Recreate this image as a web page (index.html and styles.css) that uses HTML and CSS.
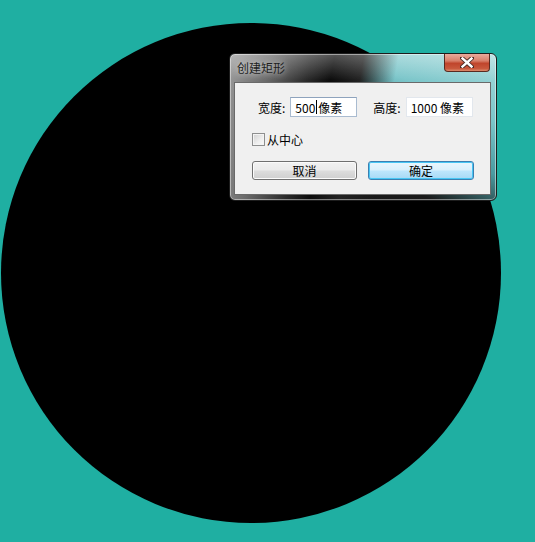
FILE: index.html
```html
<!DOCTYPE html>
<html lang="zh">
<head>
    <meta charset="UTF-8">
    <meta name="viewport" content="width=device-width, initial-scale=1.0">
    <title>创建矩形</title>
    <link rel="stylesheet" href="styles.css">
</head>
<body>
    <!-- 画布上的圆 -->
    <div class="circle"></div>

    <!-- 对话框 -->
    <div class="dialog">
        <div class="titlebar">
            <span class="title">创建矩形</span>
            <span class="close">
                <svg width="14" height="11" viewBox="0 0 14 11">
                    <path d="M2 1 L12 10 M12 1 L2 10" stroke="#4a2a24" stroke-width="4.2" stroke-linecap="square"/>
                    <path d="M2.5 1.5 L11.5 9.5 M11.5 1.5 L2.5 9.5" stroke="#ffffff" stroke-width="2.4" stroke-linecap="square"/>
                </svg>
            </span>
        </div>
        <div class="client">
            <div class="row-size">
                <span class="label">宽度:</span>
                <span class="field field-focus">500<span class="caret"></span>像素</span>
                <span class="label label-gap">高度:</span>
                <span class="field">1000 像素</span>
            </div>
            <div class="row-check">
                <span class="checkbox"></span>
                <span class="label">从中心</span>
            </div>
            <div class="row-buttons">
                <button class="button">取消</button>
                <button class="button button-default">确定</button>
            </div>
        </div>
    </div>
</body>
</html>
```

FILE: styles.css
```css
body {
    background-color: #1fafa2;
    font-family: "Noto Sans CJK SC", "Noto Sans", sans-serif;
    font-size: 12px;
    color: #000;
    margin: 0;
    padding: 0;
    width: 535px;
    height: 542px;
    overflow: hidden;
    position: relative;
}
.circle {
    position: absolute;
    left: 1px;
    top: 23px;
    width: 500px;
    height: 500px;
    border-radius: 50%;
    background-color: #000;
}
.dialog {
    position: absolute;
    left: 229px;
    top: 53px;
    width: 268px;
    height: 148px;
    box-sizing: border-box;
    border: 1px solid #1c1c1c;
    border-radius: 6px;
    box-shadow: inset 0 0 0 1px rgba(255, 255, 255, 0.45);
    background:
        linear-gradient(180deg, rgba(255, 255, 255, 0.3) 0px, rgba(255, 255, 255, 0) 26px),
        linear-gradient(100deg, #9a9a9a 0%, #6a6a6a 14%, #2a2a2a 28%, #0c0c0c 36%, #222 46%, rgba(30, 30, 30, 0) 58%),
        linear-gradient(205deg, #a6dadb 0%, #7cc6ca 25%, #4a9aa0 45%, #1a1a1a 65%, #141414 100%);
    padding: 0 5px 5px 4px;
    display: flex;
    flex-direction: column;
}
.titlebar {
    height: 28px;
    flex-shrink: 0;
    display: flex;
    align-items: center;
    justify-content: space-between;
}
.title {
    padding-left: 3px;
    color: #1e1e1e;
    text-shadow: 0 0 6px rgba(255, 255, 255, 0.8);
    margin-top: -2px;
}
.close {
    align-self: flex-start;
    width: 46px;
    height: 18px;
    margin-right: 1px;
    border: 1px solid #5a2a20;
    border-top: none;
    border-radius: 0 0 4px 4px;
    background: linear-gradient(180deg, #e9aa9c 0%, #d8806a 40%, #c0452c 55%, #c8583c 85%, #dc8a6c 100%);
    display: flex;
    align-items: center;
    justify-content: center;
    box-sizing: border-box;
}
.client {
    flex: 1;
    background-color: #f0f0f0;
    border: 1px solid #6a6a6a;
    padding: 14px 0 0 17px;
}
.row-size {
    display: flex;
    align-items: center;
    height: 20px;
    padding-left: 6px;
}
.label {
    white-space: nowrap;
}
.label-gap {
    margin-left: 16px;
}
.field {
    margin-left: 5px;
    width: 67px;
    height: 20px;
    box-sizing: border-box;
    background-color: #fff;
    border: 1px solid #e2e7ed;
    padding-left: 4px;
    display: flex;
    align-items: center;
    white-space: nowrap;
}
.field-focus {
    border-color: #a9bbd0;
    border-top-color: #8ea3bd;
}
.caret {
    display: inline-block;
    width: 1px;
    height: 14px;
    background-color: #000;
    margin: 0 1px;
}
.row-check {
    display: flex;
    align-items: center;
    margin-top: 16px;
    height: 13px;
}
.checkbox {
    width: 13px;
    height: 13px;
    box-sizing: border-box;
    border: 1px solid #8e8f8f;
    background: linear-gradient(135deg, #d0d0d0 0%, #efefef 60%, #fafafa 100%);
    box-shadow: inset 0 0 0 1px #f4f4f4;
    margin-right: 2px;
}
.row-buttons {
    display: flex;
    gap: 11px;
    margin-top: 15px;
}
.button {
    width: 105px;
    height: 19px;
    padding: 0;
    font-family: inherit;
    font-size: 12px;
    color: #000;
    border: 1px solid #707070;
    border-radius: 3px;
    background: linear-gradient(180deg, #f2f2f2 0%, #ebebeb 48%, #dddddd 52%, #cfcfcf 100%);
    box-shadow: inset 0 0 0 1px #fbfbfb;
}
.button-default {
    width: 106px;
    border-color: #3c7fb1;
    background: linear-gradient(180deg, #eaf6fd 0%, #d9f0fc 48%, #bee6fd 52%, #a7d9f5 100%);
    box-shadow: inset 0 0 0 1px #48c6f4;
}
```
